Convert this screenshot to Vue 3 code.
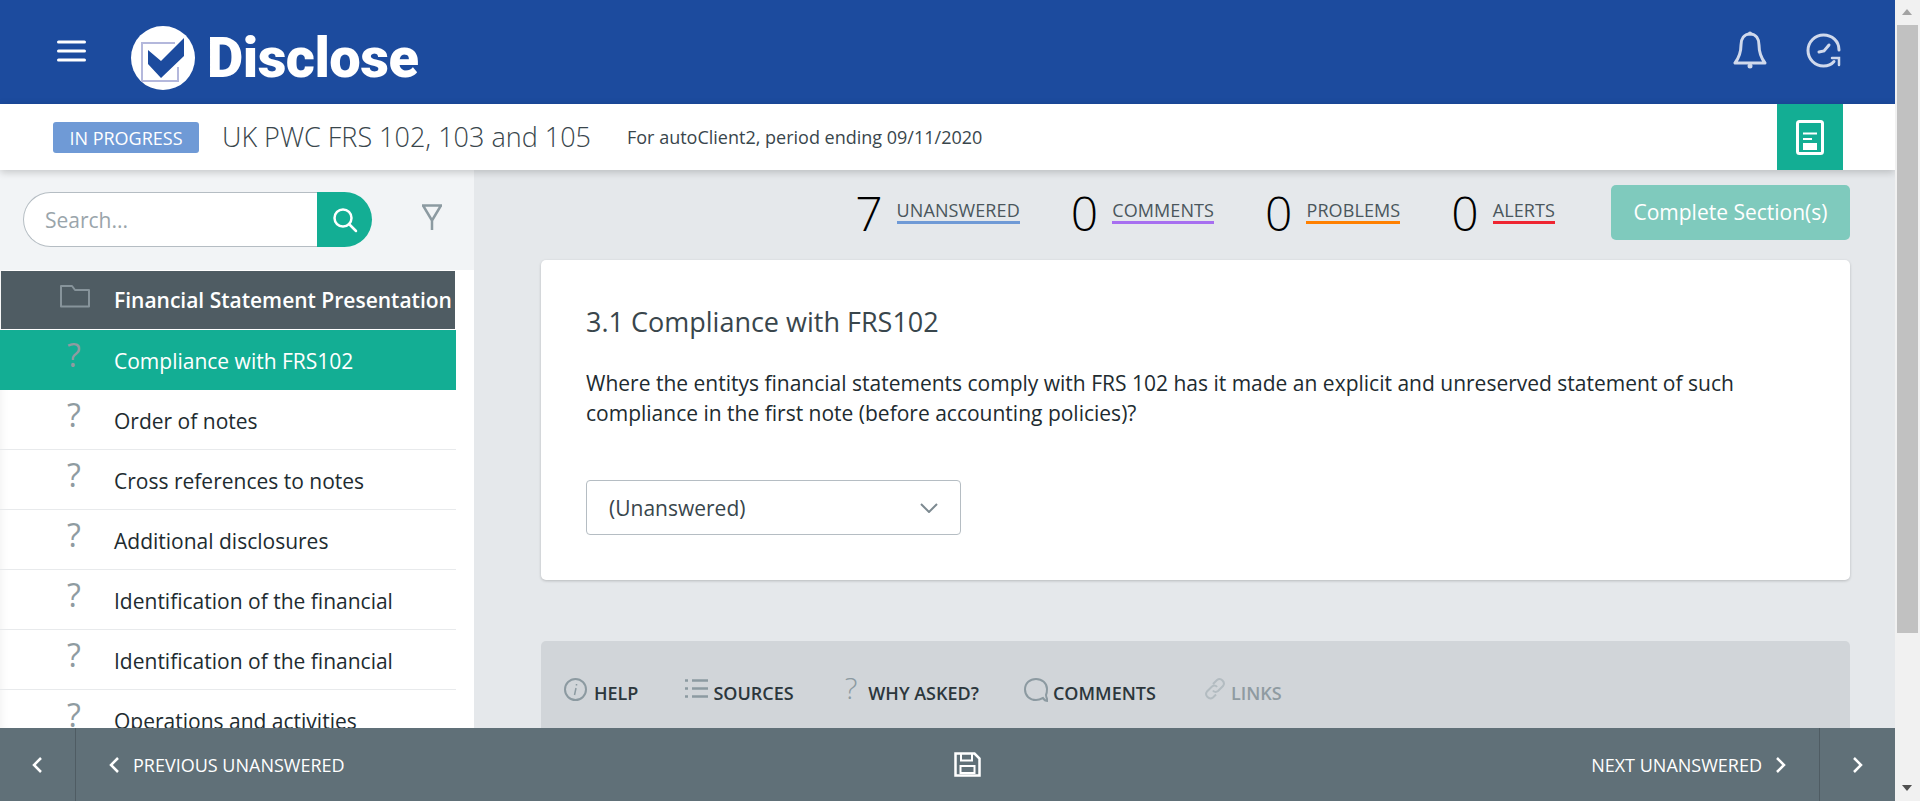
<template>
  <div class="window">
    <div class="page">
      <header class="topbar">
        <svg class="burger" width="29" height="22" viewBox="0 0 29 22">
          <path d="M1.5 2h26M1.5 11h26M1.5 20h26" stroke="#fff" stroke-width="3" stroke-linecap="round" fill="none" />
        </svg>
        <div class="logo">
          <svg width="64" height="64" viewBox="0 0 64 64">
            <ellipse cx="32" cy="32" rx="32" ry="32" fill="#fff" />
            <path d="M44 17H11v38h36V41" fill="none" stroke="#b4b8dc" stroke-width="2" />
            <path d="M17 24l13 11 23-23v18L30 52 17 38z" fill="#1c4b9e" />
          </svg>
          <span class="logo-text">Disclose</span>
        </div>
        <div class="topbar-icons">
          <svg width="34" height="39" viewBox="0 0 34 39" fill="none" stroke="#d0d9ec" stroke-width="3" stroke-linejoin="round">
            <path d="M17 3c-6 0-9 5-9 11 0 9-3 14-6 18h30c-3-4-6-9-6-18 0-6-3-11-9-11z" />
            <circle cx="17" cy="35" r="2.5" fill="#d0d9ec" stroke="none" />
            <circle cx="17" cy="2.5" r="2" fill="#d0d9ec" stroke="none" />
          </svg>
          <svg width="35" height="35" viewBox="0 0 35 35" fill="none" stroke="#d0d9ec" stroke-width="3" stroke-linecap="round">
            <path d="M33 17C33 8 26 2 17.500 2 9 2 2 9 2 17.500S9 33 17.500 33c4 0 8-1.500 10.500-4.500" />
            <path d="M26 25h7v7" stroke-width="2.500" />
            <path d="M23 12l-5 6-5 1" stroke-width="3" />
          </svg>
        </div>
      </header>

      <div class="subbar">
        <span class="badge">IN PROGRESS</span>
        <span class="doc-title">UK PWC FRS 102, 103 and 105</span>
        <span class="doc-meta">For autoClient2, period ending 09/11/2020</span>
        <div class="doc-btn">
          <svg width="28" height="35" viewBox="0 0 28 35" fill="none" stroke="#fff">
            <rect x="1.500" y="1.500" width="25" height="32" rx="2" stroke-width="3" />
            <path d="M7 13.500h14M7 19h9" stroke-width="2" />
            <rect x="7" y="23" width="14" height="7" fill="#fff" stroke="none" />
          </svg>
        </div>
      </div>

      <div class="body">
        <aside class="sidebar">
          <div class="search-area">
            <div class="search">
              <div class="search-input">Search...</div>
              <div class="search-btn">
                <svg width="26" height="26" viewBox="0 0 26 26" fill="none" stroke="#fff" stroke-width="2.500">
                  <circle cx="11" cy="11" r="8.500" />
                  <path d="M17 17l7 7" stroke-linecap="round" />
                </svg>
              </div>
            </div>
            <svg class="filter" width="20" height="26" viewBox="0 0 20 26" fill="none" stroke="#8c9aa1" stroke-width="2.500">
              <path d="M0 1.500h20M1 1.500l9 15 9-15M10 16v10" />
            </svg>
          </div>
          <div class="tree">
            <div class="row section">
              <svg class="folder" width="30" height="24" viewBox="0 0 30 24" fill="none" stroke="#87949b" stroke-width="2" stroke-linejoin="round">
                <path d="M1 22V2h11l3 4h14v16.500H1z" />
              </svg>
              <span>Financial Statement Presentation</span>
            </div>
            <div
              v-for="(item, i) in items"
              :key="i"
              class="row"
              :class="{ active: i === 0 }"
            >
              <span class="qmark">?</span>
              <span>{{ item }}</span>
            </div>
          </div>
        </aside>

        <main class="main">
          <div class="stats">
            <div v-for="s in stats" :key="s.label" class="stat">
              <span class="stat-num">{{ s.value }}</span>
              <span class="stat-label" :style="{ borderColor: s.color }">{{ s.label }}</span>
            </div>
            <button class="complete">Complete Section(s)</button>
          </div>

          <section class="card">
            <h2>3.1 Compliance with FRS102</h2>
            <p>Where the entitys financial statements comply with FRS 102 has it made an explicit and unreserved statement of such compliance in the first note (before accounting policies)?</p>
            <div class="select">
              <span>(Unanswered)</span>
              <svg width="18" height="10" viewBox="0 0 18 10" fill="none" stroke="#7d8a91" stroke-width="2">
                <path d="M1 1l8 8 8-8" />
              </svg>
            </div>
          </section>

          <section class="tabs">
            <div class="tab">
              <svg width="23" height="23" viewBox="0 0 23 23" fill="none" stroke="#8c9aa1" stroke-width="2">
                <circle cx="11.500" cy="11.500" r="10.500" />
                <path d="M12 10l-1.500 7M12.500 6v1.500" stroke-width="1.500" />
              </svg>
              <span>HELP</span>
            </div>
            <div class="tab">
              <svg width="23" height="22" viewBox="0 0 23 22" fill="none" stroke="#8c9aa1" stroke-width="2.500">
                <path d="M7 2.500h16M7 10.500h16M7 18.500h16M0 2.500h3M0 10.500h3M0 18.500h3" />
              </svg>
              <span>SOURCES</span>
            </div>
            <div class="tab">
              <span class="tab-q">?</span>
              <span>WHY ASKED?</span>
            </div>
            <div class="tab">
              <svg width="24" height="24" viewBox="0 0 24 24" fill="none" stroke="#8c9aa1" stroke-width="2">
                <path d="M22 17c1-2 1-4 1-6C23 5 18 1 12 1S1 5 1 11.500 6 22 12 22c3 0 5-1 7-2 1 2 3 3 5 3-1-2-2-4-2-6z" />
              </svg>
              <span>COMMENTS</span>
            </div>
            <div class="tab off">
              <svg width="22" height="22" viewBox="0 0 22 22" fill="none" stroke="#b3bcc1" stroke-width="2">
                <path d="M9 6l4-4c2-1.500 4-1 5.500.500S20.500 6 19 8l-5 5c-2 1.500-4 1-5-.500" />
                <path d="M13 9c-1-1.500-3-2-5-.500l-5 5c-1.500 2-1 4 .500 5.500s3.500 2 5.500.500l3-3" />
              </svg>
              <span>LINKS</span>
            </div>
          </section>
        </main>
      </div>

      <footer class="footer">
        <div class="edge left">
          <svg width="12" height="16" viewBox="0 0 12 16" fill="none" stroke="#fff" stroke-width="2.500"><path d="M10 1L3 8l7 7" /></svg>
        </div>
        <div class="footer-mid">
          <div class="nav">
            <svg width="12" height="16" viewBox="0 0 12 16" fill="none" stroke="#fff" stroke-width="2.500"><path d="M10 1L3 8l7 7" /></svg>
            <span>PREVIOUS UNANSWERED</span>
          </div>
          <svg width="27" height="25" viewBox="0 0 27 25" fill="none" stroke="#fff" stroke-width="2">
            <path d="M1.500 1.500h19l5 5v17h-24z" stroke-width="2.500" />
            <path d="M7 1.500v7h11v-7" />
            <rect x="6.500" y="14" width="14" height="7" />
          </svg>
          <div class="nav">
            <span>NEXT UNANSWERED</span>
            <svg width="12" height="16" viewBox="0 0 12 16" fill="none" stroke="#fff" stroke-width="2.500"><path d="M2 1l7 7-7 7" /></svg>
          </div>
        </div>
        <div class="edge right">
          <svg width="12" height="16" viewBox="0 0 12 16" fill="none" stroke="#fff" stroke-width="2.500"><path d="M2 1l7 7-7 7" /></svg>
        </div>
      </footer>
    </div>

    <div class="scrollbar">
      <div class="arrow up"></div>
      <div class="thumb"></div>
      <div class="arrow down"></div>
    </div>
  </div>
</template>

<script setup>
const items = [
  'Compliance with FRS102',
  'Order of notes',
  'Cross references to notes',
  'Additional disclosures',
  'Identification of the financial',
  'Identification of the financial',
  'Operations and activities'
]

const stats = [
  { value: 7, label: 'UNANSWERED', color: '#6f9ad6' },
  { value: 0, label: 'COMMENTS', color: '#a76ff0' },
  { value: 0, label: 'PROBLEMS', color: '#ff8000' },
  { value: 0, label: 'ALERTS', color: '#ee2531' }
]
</script>

<style>
html, body {
  margin: 0;
  overflow: hidden;
}
</style>

<style scoped>
.window {
  display: flex;
  width: 1920px;
  height: 801px;
  font-family: "Open Sans", sans-serif;
  color: #212b30;
}

.page {
  width: 1895px;
  display: flex;
  flex-direction: column;
  overflow: hidden;
}

.topbar {
  height: 104px;
  flex-shrink: 0;
  background: #1c4b9e;
  display: flex;
  align-items: center;
  padding-left: 57px;
}

.burger {
  margin-top: -2px;
}

.logo {
  display: flex;
  align-items: center;
  margin-left: 45px;
  margin-top: 11px;
}

.logo-text {
  font-family: Roboto, sans-serif;
  font-weight: 900;
  font-size: 56px;
  color: #fff;
  margin-left: 12px;
  letter-spacing: -0.5px;
  line-height: 64px;
}

.topbar-icons {
  margin-left: auto;
  display: flex;
  align-items: center;
  gap: 39px;
  padding-right: 54px;
  margin-top: -3px;
}

.subbar {
  height: 66px;
  flex-shrink: 0;
  background: #fff;
  display: flex;
  align-items: center;
  padding-left: 53px;
  padding-right: 52px;
  box-shadow: 0 2px 8px rgba(0, 0, 0, 0.2);
  position: relative;
  z-index: 2;
}

.badge {
  width: 146px;
  height: 31px;
  line-height: 33px;
  text-align: center;
  background: #6f9ad6;
  color: #fff;
  font-size: 18px;
  border-radius: 3px;
}

.doc-title {
  margin-left: 23px;
  margin-top: -2px;
  font-size: 27px;
  font-weight: 300;
  color: #39464c;
}

.doc-meta {
  margin-left: 36px;
  font-size: 18px;
  color: #39464c;
}

.doc-btn {
  margin-left: auto;
  width: 66px;
  height: 66px;
  background: #13ae94;
  display: flex;
  align-items: center;
  justify-content: center;
}

.body {
  flex: 1;
  min-height: 0;
  display: flex;
}

.sidebar {
  width: 474px;
  flex-shrink: 0;
  background: #fff;
  box-shadow: inset 8px 0 8px -6px rgba(0, 0, 0, 0.05);
}

.search-area {
  height: 100px;
  background: #f2f4f6;
  display: flex;
  align-items: flex-start;
  padding: 22px 0 0 23px;
  box-sizing: border-box;
}

.search {
  width: 349px;
  height: 55px;
  display: flex;
}

.search-input {
  flex: 1;
  background: #fff;
  border: 1px solid #b5bdc3;
  border-right: none;
  border-radius: 28px 0 0 28px;
  font-size: 21px;
  color: #9aa5ab;
  line-height: 55px;
  padding-left: 21px;
}

.search-btn {
  width: 55px;
  background: #13ae94;
  border-radius: 0 28px 28px 0;
  display: flex;
  align-items: center;
  justify-content: center;
}

.filter {
  margin: 12px 0 0 50px;
}

.tree {
  width: 456px;
}

.row {
  height: 60px;
  box-sizing: border-box;
  display: flex;
  align-items: center;
  font-size: 21px;
  padding: 2px 0 0 114px;
  position: relative;
  border-bottom: 1px solid #e8eaec;
}

.section {
  margin-top: 1px;
  height: 58px;
  margin-left: 1px;
  width: 454px;
  padding: 0 0 0 113px;
  background: #4f5c63;
  color: #fff;
  font-weight: 600;
  border-bottom: none;
}

.active {
  background: #13ae94;
  color: #fff;
  margin-top: 1px;
  border-bottom: none;
}

.folder {
  position: absolute;
  left: 59px;
  top: 13px;
}

.qmark {
  position: absolute;
  left: 67px;
  top: 5px;
  font-size: 32px;
  line-height: 40px;
  color: #8f9ba1;
}

.main {
  flex: 1;
  min-width: 0;
  background: #e5e8eb;
  padding: 15px 45px 0 67px;
}

.stats {
  height: 55px;
  display: flex;
  align-items: center;
  justify-content: flex-end;
}

.stat {
  display: flex;
  align-items: center;
  margin-right: 51px;
}

.stat-num {
  font-size: 48px;
  font-weight: 300;
  color: #000;
  line-height: 55px;
  margin-top: -1px;
  margin-right: 14px;
}

.stat-label {
  font-size: 18px;
  letter-spacing: 0.1px;
  color: #4a565c;
  line-height: 22px;
  margin-top: -2px;
  border-bottom: 3px solid;
}

.complete {
  width: 239px;
  height: 55px;
  margin-left: 5px;
  padding: 0 0 2px;
  border: none;
  border-radius: 5px;
  background: #7fcabd;
  color: #fff;
  font-family: inherit;
  font-size: 21px;
}

.card {
  margin-top: 20px;
  height: 320px;
  box-sizing: border-box;
  background: #fff;
  border-radius: 5px;
  box-shadow: 0 1px 3px rgba(0, 0, 0, 0.2);
  padding: 42px 45px 0;
}

.card h2 {
  margin: 0;
  font-size: 27px;
  font-weight: 400;
  line-height: 40px;
  color: #39464c;
}

.card p {
  margin: 26px 0 0;
  font-size: 21px;
  line-height: 30px;
  color: #212b30;
}

.select {
  margin-top: 52px;
  width: 375px;
  height: 55px;
  box-sizing: border-box;
  background: #fff;
  border: 1px solid #b5bdc3;
  border-radius: 4px;
  display: flex;
  align-items: center;
  justify-content: space-between;
  padding: 0 22px;
  font-size: 21px;
  color: #39464c;
}

.tabs {
  margin-top: 61px;
  height: 120px;
  background: #d1d5d9;
  border-radius: 5px 5px 0 0;
  display: flex;
  align-items: flex-start;
  padding: 37px 0 0 23px;
}

.tab {
  display: flex;
  align-items: flex-start;
  gap: 5px;
  margin-right: 47px;
  font-size: 18px;
  font-weight: 600;
  color: #2c373c;
}

.tab:nth-child(1) {
  gap: 7px;
}

.tab:nth-child(2) {
  margin-right: 51px;
}

.tab:nth-child(3) {
  gap: 7px;
  margin-right: 45px;
}

.tab:nth-child(4) {
  margin-right: 48px;
}

.tab span {
  line-height: 22px;
  margin-top: 4px;
}

.tab .tab-q {
  font-size: 30px;
  font-weight: 300;
  line-height: 24px;
  margin-top: -2px;
  color: #8c9aa1;
  margin-right: 4px;
}

.off {
  color: #8f9ba1;
  margin-right: 0;
}

.footer {
  height: 73px;
  flex-shrink: 0;
  background: #607078;
  display: flex;
  color: #fff;
  position: relative;
  z-index: 3;
}

.edge {
  width: 76px;
  display: flex;
  align-items: center;
  justify-content: center;
  box-sizing: border-box;
}

.edge.left {
  border-right: 1px solid #4f5c63;
  padding-right: 2px;
}

.edge.right {
  border-left: 1px solid #4f5c63;
}

.footer-mid {
  flex: 1;
  display: flex;
  align-items: center;
  justify-content: space-between;
  padding: 0 32px 0 32px;
}

.nav {
  display: flex;
  align-items: center;
  gap: 13px;
  font-size: 18px;
}

.scrollbar {
  width: 25px;
  background: #f1f1f1;
  position: relative;
  flex-shrink: 0;
}

.thumb {
  position: absolute;
  top: 25px;
  left: 2px;
  right: 2px;
  height: 608px;
  background: #c1c1c1;
}

.arrow {
  position: absolute;
  left: 7px;
  width: 0;
  height: 0;
  border-left: 5.5px solid transparent;
  border-right: 5.5px solid transparent;
}

.arrow.up {
  top: 9px;
  border-bottom: 6px solid #a3a3a3;
}

.arrow.down {
  bottom: 10px;
  border-top: 6px solid #505050;
}
</style>
